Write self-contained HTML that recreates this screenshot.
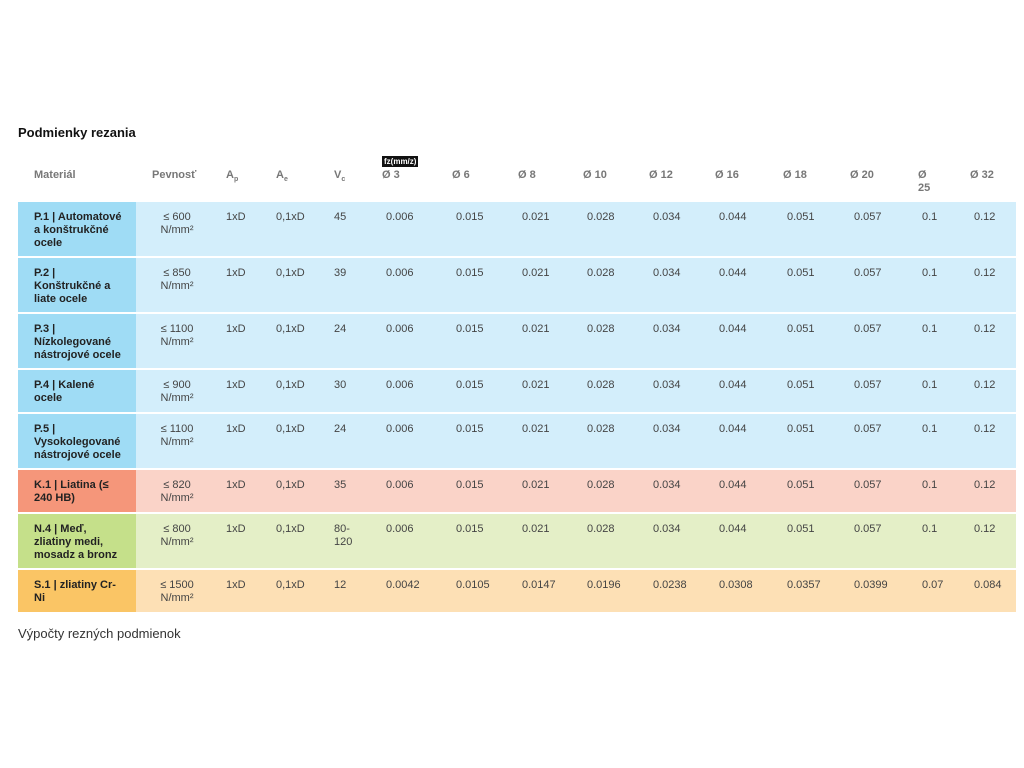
<!DOCTYPE html>
<html><head><meta charset="utf-8"><style>
body{margin:0;background:#fff;font-family:"Liberation Sans",sans-serif;color:#333;width:1024px;height:768px;position:relative;overflow:hidden}
h2{position:absolute;left:18px;top:125px;margin:0;font-size:13px;font-weight:bold;color:#111}
table{position:absolute;left:18px;top:150px;border-collapse:collapse;table-layout:fixed;width:998px;font-size:11px}
td,th{vertical-align:top;padding:9px 0 0 16px;line-height:13px;text-align:left;border-bottom:2px solid #fff}
th{font-weight:bold;color:#777;height:33px;padding-top:19px;padding-left:12px;border-bottom:0;position:relative}
td{color:#444}
td.m{font-weight:bold;color:#222;padding-left:16px;white-space:nowrap}
td.pv{text-align:center;padding-left:8px;padding-right:0}
th.l{padding-left:16px}
sub{font-size:7px;vertical-align:-3px}
.fz{position:absolute;left:12px;top:6px;background:#111;color:#fff;font-size:8px;padding:0 2px;line-height:11px}
.b td{background:#d3eefb}.b td.m{background:#9fdcf5}
.k td{background:#fad3c8}.k td.m{background:#f5967a}
.g td{background:#e4efc7}.g td.m{background:#c5e08a}
.o td{background:#fde0b5}.o td.m{background:#fac565}
.r3 td{height:45px}.r2 td{height:33px}
p{position:absolute;left:18px;top:626px;margin:0;font-size:13px;color:#333}
</style></head><body>
<h2>Podmienky rezania</h2>
<table>
<colgroup><col style="width:118px"><col style="width:74px"><col style="width:50px"><col style="width:58px"><col style="width:52px"><col style="width:70px"><col style="width:66px"><col style="width:65px"><col style="width:66px"><col style="width:66px"><col style="width:68px"><col style="width:67px"><col style="width:68px"><col style="width:52px"><col style="width:58px"></colgroup>
<tr><th class="l">Materiál</th><th class="l">Pevnosť</th><th class="l">A<sub>p</sub></th><th class="l">A<sub>e</sub></th><th class="l">V<sub>c</sub></th><th><span class="fz">fz(mm/z)</span>Ø 3</th><th>Ø 6</th><th>Ø 8</th><th>Ø 10</th><th>Ø 12</th><th>Ø 16</th><th>Ø 18</th><th>Ø 20</th><th>Ø<br>25</th><th>Ø 32</th></tr>
<tr class="b r3"><td class="m">P.1 | Automatové<br>a konštrukčné<br>ocele</td><td class="pv">≤ 600<br>N/mm²</td><td>1xD</td><td>0,1xD</td><td>45</td><td>0.006</td><td>0.015</td><td>0.021</td><td>0.028</td><td>0.034</td><td>0.044</td><td>0.051</td><td>0.057</td><td>0.1</td><td>0.12</td></tr>
<tr class="b r3"><td class="m">P.2 |<br>Konštrukčné a<br>liate ocele</td><td class="pv">≤ 850<br>N/mm²</td><td>1xD</td><td>0,1xD</td><td>39</td><td>0.006</td><td>0.015</td><td>0.021</td><td>0.028</td><td>0.034</td><td>0.044</td><td>0.051</td><td>0.057</td><td>0.1</td><td>0.12</td></tr>
<tr class="b r3"><td class="m">P.3 |<br>Nízkolegované<br>nástrojové ocele</td><td class="pv">≤ 1100<br>N/mm²</td><td>1xD</td><td>0,1xD</td><td>24</td><td>0.006</td><td>0.015</td><td>0.021</td><td>0.028</td><td>0.034</td><td>0.044</td><td>0.051</td><td>0.057</td><td>0.1</td><td>0.12</td></tr>
<tr class="b r2"><td class="m">P.4 | Kalené<br>ocele</td><td class="pv">≤ 900<br>N/mm²</td><td>1xD</td><td>0,1xD</td><td>30</td><td>0.006</td><td>0.015</td><td>0.021</td><td>0.028</td><td>0.034</td><td>0.044</td><td>0.051</td><td>0.057</td><td>0.1</td><td>0.12</td></tr>
<tr class="b r3"><td class="m">P.5 |<br>Vysokolegované<br>nástrojové ocele</td><td class="pv">≤ 1100<br>N/mm²</td><td>1xD</td><td>0,1xD</td><td>24</td><td>0.006</td><td>0.015</td><td>0.021</td><td>0.028</td><td>0.034</td><td>0.044</td><td>0.051</td><td>0.057</td><td>0.1</td><td>0.12</td></tr>
<tr class="k r2"><td class="m">K.1 | Liatina (≤<br>240 HB)</td><td class="pv">≤ 820<br>N/mm²</td><td>1xD</td><td>0,1xD</td><td>35</td><td>0.006</td><td>0.015</td><td>0.021</td><td>0.028</td><td>0.034</td><td>0.044</td><td>0.051</td><td>0.057</td><td>0.1</td><td>0.12</td></tr>
<tr class="g r3"><td class="m">N.4 | Meď,<br>zliatiny medi,<br>mosadz a bronz</td><td class="pv">≤ 800<br>N/mm²</td><td>1xD</td><td>0,1xD</td><td>80-<br>120</td><td>0.006</td><td>0.015</td><td>0.021</td><td>0.028</td><td>0.034</td><td>0.044</td><td>0.051</td><td>0.057</td><td>0.1</td><td>0.12</td></tr>
<tr class="o r2"><td class="m">S.1 | zliatiny Cr-<br>Ni</td><td class="pv">≤ 1500<br>N/mm²</td><td>1xD</td><td>0,1xD</td><td>12</td><td>0.0042</td><td>0.0105</td><td>0.0147</td><td>0.0196</td><td>0.0238</td><td>0.0308</td><td>0.0357</td><td>0.0399</td><td>0.07</td><td>0.084</td></tr>
</table>
<p>Výpočty rezných podmienok</p>
</body></html>
